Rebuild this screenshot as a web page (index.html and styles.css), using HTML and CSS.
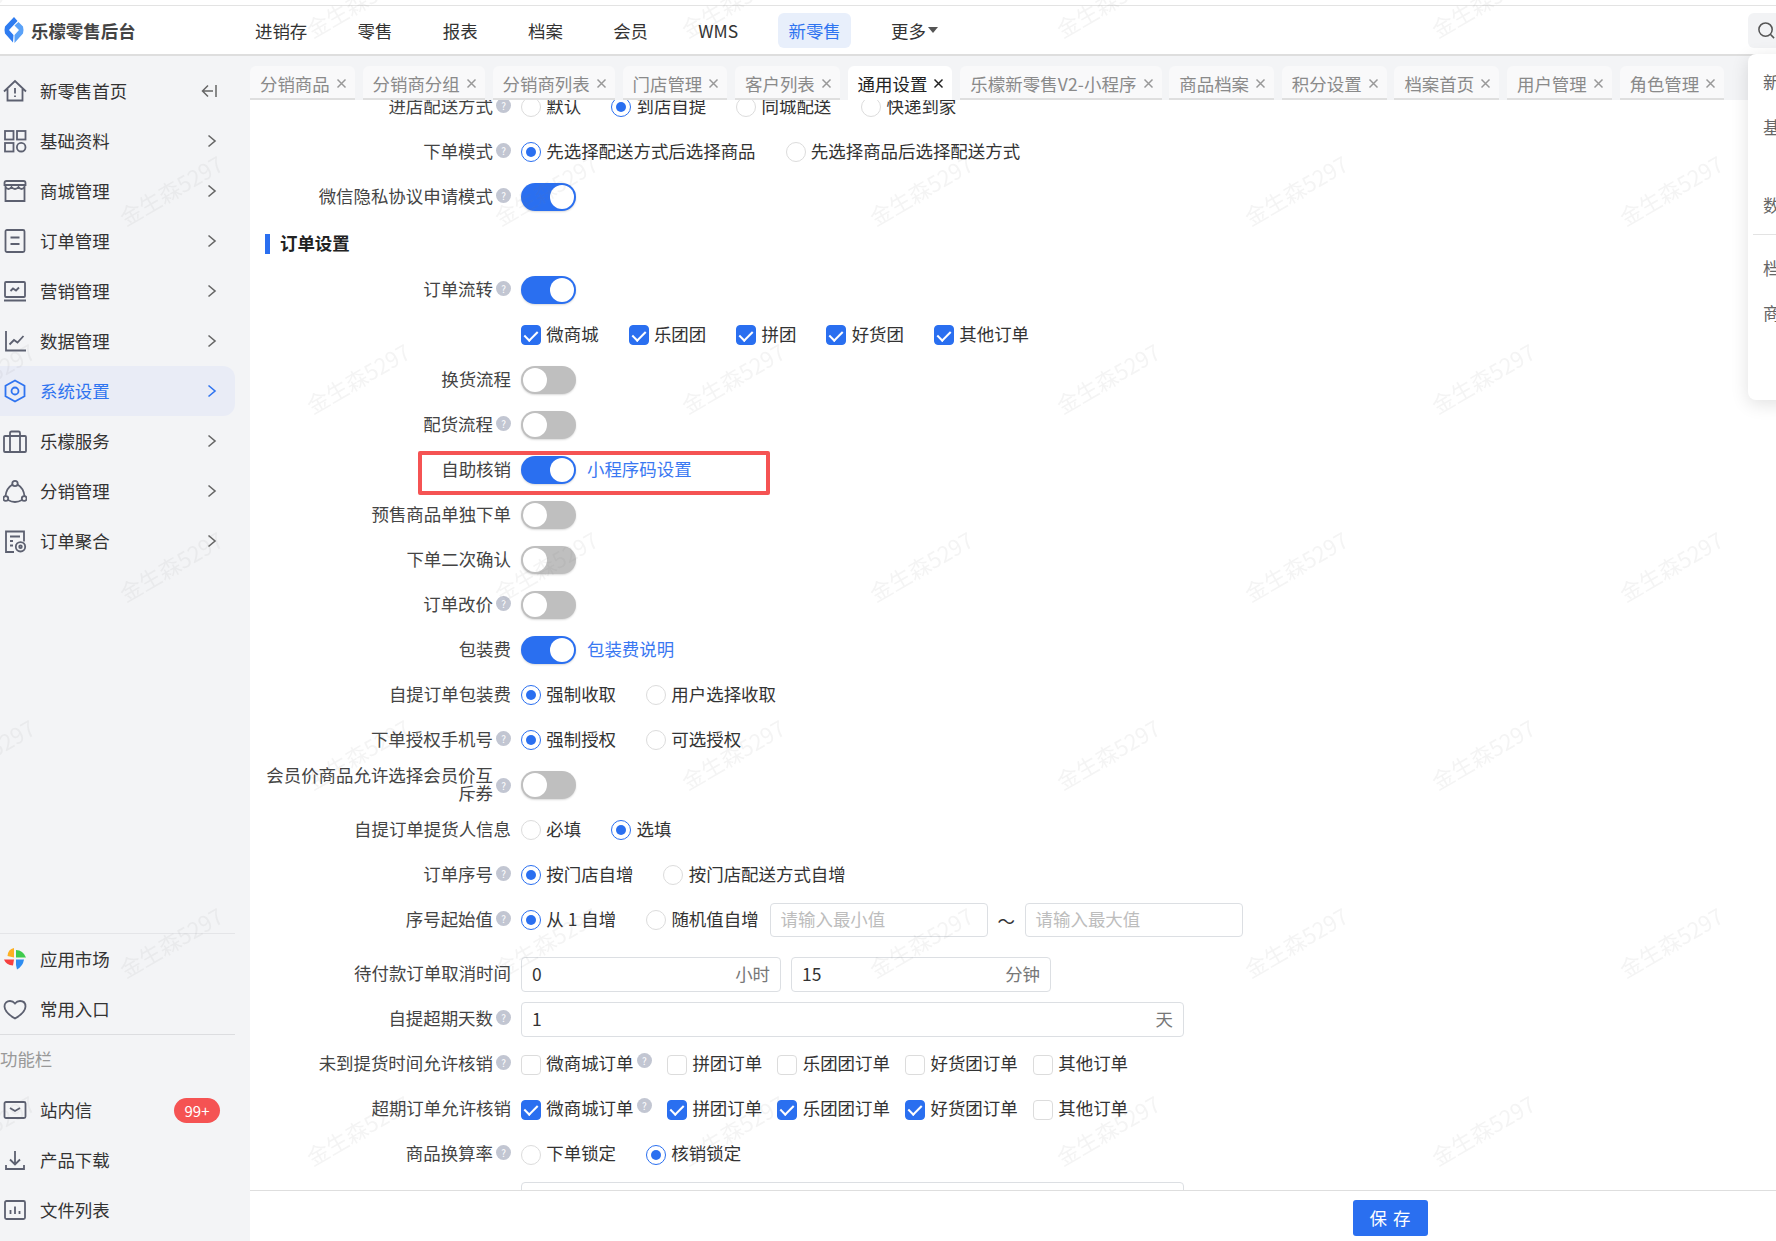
FILE: index.html
```html
<!DOCTYPE html>
<html lang="zh-CN">
<head>
<meta charset="utf-8">
<title>乐檬零售后台</title>
<link rel="stylesheet" href="styles.css">
</head>
<body>
<svg class="defs" aria-hidden="true"><defs>
<symbol id="x" viewBox="0 0 11 11"><path d="M1.5 1.5l8 8M9.5 1.5l-8 8" fill="none" stroke="currentColor" stroke-width="1.5"/></symbol>
<symbol id="chev" viewBox="0 0 10 14"><path d="M1.5 1.5L8 7l-6.500 5.500" fill="none" stroke="currentColor" stroke-width="1.6"/></symbol>
</defs></svg>
<div class="app">
  <header class="topbar">
    <div class="brand">
      <svg class="brand-logo" viewBox="0 0 20 26"><path d="M10 0L1 9.500Q0 13 1 16.500L9 25.500 9.500 18 5 13 13.500 4z" fill="#2f7cf0"/><path d="M19 9.500L14.500 5 10.500 8.500 15 13l-4.500 5v8L19 16.500Q20 13 19 9.500z" fill="#5aa2f8"/></svg>
      <span class="brand-name">乐檬零售后台</span>
    </div>
    <nav class="topnav">
      <a class="topnav-item">进销存</a>
      <a class="topnav-item">零售</a>
      <a class="topnav-item">报表</a>
      <a class="topnav-item">档案</a>
      <a class="topnav-item">会员</a>
      <a class="topnav-item">WMS</a>
      <a class="topnav-item is-active">新零售</a>
      <a class="topnav-item">更多<i class="caret"></i></a>
    </nav>
    <div class="search-btn"><svg viewBox="0 0 20 20"><circle cx="9" cy="9" r="7" fill="none" stroke="#555" stroke-width="1.6"/><path d="M14 14l4 4" stroke="#555" stroke-width="1.6"/></svg></div>
  </header>
  <div class="body">
    <aside class="sidebar">
      <ul class="menu">
        <li class="menu-item"><svg class="mi" viewBox="0 0 24 24"><path d="M1 12.500L12 2l11 10.500M4.500 10v11.500h15V10M12 9v5.500M12 16.500v1.500"/></svg><span class="mt">新零售首页</span><svg class="collapse" viewBox="0 0 16 14"><path d="M7 1.500L1.500 7 7 12.500M1.500 7H12M15 1v12"/></svg></li>
        <li class="menu-item"><svg class="mi" viewBox="0 0 24 24"><rect x="2" y="2" width="8.500" height="8.500"/><rect x="14" y="2" width="8.500" height="8.500"/><rect x="2" y="14" width="8.500" height="8.500"/><circle cx="18.200" cy="18.200" r="4.300"/></svg><span class="mt">基础资料</span><svg class="chev"><use href="#chev"/></svg></li>
        <li class="menu-item"><svg class="mi" viewBox="0 0 24 24"><path d="M3.500 2h17q2 0 2 2v2H1.500V4q0-2 2-2zM2.500 6v16h19V6M2.500 8q3 4 6 0 3.500 4 7 0 3 4 6 0"/></svg><span class="mt">商城管理</span><svg class="chev"><use href="#chev"/></svg></li>
        <li class="menu-item"><svg class="mi" viewBox="0 0 24 24"><rect x="2.500" y="1" width="19" height="22" rx="1.500"/><path d="M7.500 8.500h9M7.500 15h9"/></svg><span class="mt">订单管理</span><svg class="chev"><use href="#chev"/></svg></li>
        <li class="menu-item"><svg class="mi" viewBox="0 0 24 24"><rect x="2" y="3" width="20" height="15" rx="1"/><path d="M1 21.500h22M7.500 12l2.500-2.500 3 2 3-3"/></svg><span class="mt">营销管理</span><svg class="chev"><use href="#chev"/></svg></li>
        <li class="menu-item"><svg class="mi" viewBox="0 0 24 24"><path d="M3 2v19.500h20M6.500 15.500l4.500-4.500 3.500 2.500 6-6.500"/></svg><span class="mt">数据管理</span><svg class="chev"><use href="#chev"/></svg></li>
        <li class="menu-item is-active"><svg class="mi" viewBox="0 0 24 24"><path d="M12 1.500l9.500 5.300v10.400L12 22.500l-9.500-5.300V6.800z"/><circle cx="12" cy="12" r="3.500"/></svg><span class="mt">系统设置</span><svg class="chev"><use href="#chev"/></svg></li>
        <li class="menu-item"><svg class="mi" viewBox="0 0 24 24"><rect x="1" y="7" width="22" height="16" rx="1"/><path d="M7 23V4q0-1.500 1.500-1.500h7Q17 2.500 17 4v19"/></svg><span class="mt">乐檬服务</span><svg class="chev"><use href="#chev"/></svg></li>
        <li class="menu-item"><svg class="mi" viewBox="0 0 24 24"><circle cx="12" cy="4.500" r="2.700"/><circle cx="2.800" cy="19.500" r="2.400"/><circle cx="21.200" cy="19.500" r="2.400"/><path d="M9.500 5.500Q3.500 9 2.500 17M14.500 5.500q6 3.500 7 11.500M5 21q7 4 14 0"/></svg><span class="mt">分销管理</span><svg class="chev"><use href="#chev"/></svg></li>
        <li class="menu-item"><svg class="mi" viewBox="0 0 24 24"><path d="M11 23H3V2.500h18v10"/><path d="M7 7.500h10M7 12h3M7 16.500h3"/><circle cx="17.500" cy="17.800" r="4.700"/><circle cx="17.500" cy="17.800" r="1.300"/></svg><span class="mt">订单聚合</span><svg class="chev"><use href="#chev"/></svg></li>
      </ul>
      <ul class="menu menu-bottom">
        <li class="menu-item"><svg class="mi mi-color" viewBox="0 0 24 24"><path d="M11 10.500V1Q5 2 4.500 9z" fill="#fdb022"/><path d="M13 10.500V3q7 0 10 7.500z" fill="#3ecb4d"/><path d="M13 12.500h8q-1 6.500-7 10L13 18z" fill="#2d8cf0"/><path d="M11 12.500H1q2 5.500 9 6z" fill="#f5403f"/></svg><span class="mt">应用市场</span></li>
        <li class="menu-item"><svg class="mi" viewBox="0 0 24 24"><path d="M12 21.500C5 17.500 1.500 13.500 1.500 9.500 1.500 6 4 4 7 4q3 0 5 2.500Q14 4 17 4q5.500 0 5.500 5.500c0 4-3.500 8-10.500 12z"/></svg><span class="mt">常用入口</span></li>
      </ul>
      <div class="menu-group">功能栏</div>
      <ul class="menu">
        <li class="menu-item"><svg class="mi" viewBox="0 0 24 24"><rect x="1.500" y="4" width="21" height="16" rx="1.500"/><path d="M7 10l5 3 5-3"/></svg><span class="mt">站内信</span><span class="badge">99+</span></li>
        <li class="menu-item"><svg class="mi" viewBox="0 0 24 24"><path d="M12 3v13M7 11.500l5 5 5-5M3 17v4h18v-4"/></svg><span class="mt">产品下载</span></li>
        <li class="menu-item"><svg class="mi" viewBox="0 0 24 24"><rect x="2" y="3" width="20" height="18" rx="1.500"/><path d="M7.500 16v-4M12 16V8.500M16.500 16v-3"/></svg><span class="mt">文件列表</span></li>
      </ul>
    </aside>
    <main class="main">
      <div class="tabs">
        <div class="tab">分销商品<svg class="tab-x"><use href="#x"/></svg></div>
        <div class="tab">分销商分组<svg class="tab-x"><use href="#x"/></svg></div>
        <div class="tab">分销商列表<svg class="tab-x"><use href="#x"/></svg></div>
        <div class="tab">门店管理<svg class="tab-x"><use href="#x"/></svg></div>
        <div class="tab">客户列表<svg class="tab-x"><use href="#x"/></svg></div>
        <div class="tab is-active">通用设置<svg class="tab-x"><use href="#x"/></svg></div>
        <div class="tab tab-long">乐檬新零售V2-小程序<svg class="tab-x"><use href="#x"/></svg></div>
        <div class="tab">商品档案<svg class="tab-x"><use href="#x"/></svg></div>
        <div class="tab">积分设置<svg class="tab-x"><use href="#x"/></svg></div>
        <div class="tab">档案首页<svg class="tab-x"><use href="#x"/></svg></div>
        <div class="tab">用户管理<svg class="tab-x"><use href="#x"/></svg></div>
        <div class="tab">角色管理<svg class="tab-x"><use href="#x"/></svg></div>
      </div>
      <div class="scroll">
        <form class="form">
          <div class="row"><div class="label"><span>进店配送方式</span><i class="help">?</i></div><div class="ctrl opts">
            <label class="opt"><i class="radio"></i>默认</label><label class="opt"><i class="radio on"></i>到店自提</label><label class="opt"><i class="radio"></i>同城配送</label><label class="opt"><i class="radio"></i>快递到家</label></div></div>
          <div class="row"><div class="label"><span>下单模式</span><i class="help">?</i></div><div class="ctrl opts">
            <label class="opt"><i class="radio on"></i>先选择配送方式后选择商品</label><label class="opt"><i class="radio"></i>先选择商品后选择配送方式</label></div></div>
          <div class="row"><div class="label"><span>微信隐私协议申请模式</span><i class="help">?</i></div><div class="ctrl"><i class="switch on"></i></div></div>
          <h3 class="section">订单设置</h3>
          <div class="row"><div class="label"><span>订单流转</span><i class="help">?</i></div><div class="ctrl"><i class="switch on"></i></div></div>
          <div class="row"><div class="label"></div><div class="ctrl opts">
            <label class="opt"><i class="check on"></i>微商城</label><label class="opt"><i class="check on"></i>乐团团</label><label class="opt"><i class="check on"></i>拼团</label><label class="opt"><i class="check on"></i>好货团</label><label class="opt"><i class="check on"></i>其他订单</label></div></div>
          <div class="row"><div class="label"><span>换货流程</span></div><div class="ctrl"><i class="switch"></i></div></div>
          <div class="row"><div class="label"><span>配货流程</span><i class="help">?</i></div><div class="ctrl"><i class="switch"></i></div></div>
          <div class="row row-mark"><div class="label"><span>自助核销</span></div><div class="ctrl"><i class="switch on"></i><a class="link">小程序码设置</a></div><div class="mark"></div></div>
          <div class="row"><div class="label"><span>预售商品单独下单</span></div><div class="ctrl"><i class="switch"></i></div></div>
          <div class="row"><div class="label"><span>下单二次确认</span></div><div class="ctrl"><i class="switch"></i></div></div>
          <div class="row"><div class="label"><span>订单改价</span><i class="help">?</i></div><div class="ctrl"><i class="switch"></i></div></div>
          <div class="row"><div class="label"><span>包装费</span></div><div class="ctrl"><i class="switch on"></i><a class="link">包装费说明</a></div></div>
          <div class="row"><div class="label"><span>自提订单包装费</span></div><div class="ctrl opts">
            <label class="opt"><i class="radio on"></i>强制收取</label><label class="opt"><i class="radio"></i>用户选择收取</label></div></div>
          <div class="row"><div class="label"><span>下单授权手机号</span><i class="help">?</i></div><div class="ctrl opts">
            <label class="opt"><i class="radio on"></i>强制授权</label><label class="opt"><i class="radio"></i>可选授权</label></div></div>
          <div class="row"><div class="label"><span class="wrap">会员价商品允许选择会员价互斥券</span><i class="help help-mid">?</i></div><div class="ctrl"><i class="switch"></i></div></div>
          <div class="row"><div class="label"><span>自提订单提货人信息</span></div><div class="ctrl opts">
            <label class="opt"><i class="radio"></i>必填</label><label class="opt"><i class="radio on"></i>选填</label></div></div>
          <div class="row"><div class="label"><span>订单序号</span><i class="help">?</i></div><div class="ctrl opts">
            <label class="opt"><i class="radio on"></i>按门店自增</label><label class="opt"><i class="radio"></i>按门店配送方式自增</label></div></div>
          <div class="row"><div class="label"><span>序号起始值</span><i class="help">?</i></div><div class="ctrl opts opts-seq">
            <label class="opt"><i class="radio on"></i>从 1 自增</label><label class="opt"><i class="radio"></i>随机值自增</label>
            <div class="range"><div class="input w218 ph">请输入最小值</div><span class="tilde">～</span><div class="input w218 ph">请输入最大值</div></div></div></div>
          <div class="row row-gap"><div class="label"><span>待付款订单取消时间</span></div><div class="ctrl inputs">
            <div class="input w260"><span>0</span><span class="suffix">小时</span></div><div class="input w260"><span>15</span><span class="suffix">分钟</span></div></div></div>
          <div class="row"><div class="label"><span>自提超期天数</span><i class="help">?</i></div><div class="ctrl"><div class="input w663"><span>1</span><span class="suffix">天</span></div></div></div>
          <div class="row"><div class="label"><span>未到提货时间允许核销</span><i class="help">?</i></div><div class="ctrl opts opts-tight">
            <label class="opt"><i class="check"></i>微商城订单<i class="help help-in">?</i></label><label class="opt"><i class="check"></i>拼团订单</label><label class="opt"><i class="check"></i>乐团团订单</label><label class="opt"><i class="check"></i>好货团订单</label><label class="opt"><i class="check"></i>其他订单</label></div></div>
          <div class="row"><div class="label"><span>超期订单允许核销</span></div><div class="ctrl opts opts-tight">
            <label class="opt"><i class="check on"></i>微商城订单<i class="help help-in">?</i></label><label class="opt"><i class="check on"></i>拼团订单</label><label class="opt"><i class="check on"></i>乐团团订单</label><label class="opt"><i class="check on"></i>好货团订单</label><label class="opt"><i class="check"></i>其他订单</label></div></div>
          <div class="row"><div class="label"><span>商品换算率</span><i class="help">?</i></div><div class="ctrl opts">
            <label class="opt"><i class="radio"></i>下单锁定</label><label class="opt"><i class="radio on"></i>核销锁定</label></div></div>
          <div class="row"><div class="label"></div><div class="ctrl"><div class="input w663"></div></div></div>
        </form>
      </div>
      <footer class="footer"><button class="save" type="button">保 存</button></footer>
    </main>
  </div>
  <div class="dropdown">
    <div class="dd-item">新零售</div>
    <div class="dd-item">基础</div>
    <div class="dd-item dd-far">数据</div>
    <div class="dd-sep"></div>
    <div class="dd-item">档案</div>
    <div class="dd-item">商品</div>
  </div>
  <svg class="watermark" aria-hidden="true">
    <defs><pattern id="wm" x="-99" y="100" width="375" height="376" patternUnits="userSpaceOnUse">
      <text class="wm-text" transform="translate(271 92) rotate(-30)" text-anchor="middle" dy="7">金生森5297</text>
      <text class="wm-text" transform="translate(83 280) rotate(-30)" text-anchor="middle" dy="7">金生森5297</text>
    </pattern></defs>
    <rect width="100%" height="100%" fill="url(#wm)"/>
  </svg>
</div>
</body>
</html>
```
FILE: styles.css
```css
* { box-sizing: border-box; }
html, body { margin: 0; height: 100%; overflow: hidden; background: #fff; }
body { font-family: "Noto Sans CJK SC", "Noto Sans", sans-serif; font-size: 17.450px; color: #333; }
ul { list-style: none; margin: 0; padding: 0; }
i { font-style: normal; }
.defs { position: absolute; width: 0; height: 0; }

.app { position: relative; width: 1776px; height: 1241px; overflow: hidden; display: flex; flex-direction: column; padding-top: 5px; }

/* top bar */
.topbar { flex: none; height: 51px; display: flex; align-items: center; border-top: 1px solid #e3e3e3; border-bottom: 2px solid #dedede; background: #fff; }
.brand { width: 245px; flex: none; display: flex; align-items: center; padding-left: 3.500px; gap: 7.500px; }
.brand-logo { width: 20px; height: 26px; flex: none; }
.brand-name { font-weight: 700; color: #444; white-space: nowrap; }
.topnav { display: flex; gap: 30.300px; align-items: center; }
.topnav-item { height: 35px; padding: 0 10px; display: flex; align-items: center; border-radius: 6px; color: #333; white-space: nowrap; }
.topnav-item.is-active { background: #e8effb; color: #2f74f0; }
.caret { width: 0; height: 0; margin-left: 2px; border: 5.500px solid transparent; border-top: 6px solid #555; border-bottom: 0; }
.search-btn { margin-left: auto; width: 28px; height: 35px; background: #f2f3f5; border-radius: 6px 0 0 6px; display: flex; align-items: center; padding-left: 9px; }
.search-btn svg { width: 19px; height: 19px; flex: none; }

.body { flex: 1; min-height: 0; display: flex; }

/* sidebar */
.sidebar { width: 250px; flex: none; background: #f3f4f6; display: flex; flex-direction: column; padding: 10px 0 6px; }
.menu-item { width: 235px; height: 50px; display: flex; align-items: center; position: relative; padding-left: 40px; border-radius: 0 12px 12px 0; color: #333; }
.menu-item.is-active { background: #e9ecf6; color: #2f74f0; }
.mi { position: absolute; left: 3px; top: 13px; width: 24px; height: 24px; fill: none; stroke: #5c6070; stroke-width: 1.8; }
.mi-color { stroke: none; }
.is-active .mi { stroke: #2f74f0; }
.mt { flex: none; margin-bottom: 2px; }
.chev { position: absolute; left: 207px; top: 18px; width: 10px; height: 14px; color: #666; }
.is-active .chev { color: #2f74f0; }
.collapse { position: absolute; left: 201px; top: 18px; width: 16px; height: 14px; fill: none; stroke: #666; stroke-width: 1.5; }
.menu-bottom { margin-top: auto; width: 235px; border-top: 1px solid #e4e5e8; border-bottom: 1px solid #dcdde0; }
.menu-group { width: 235px; height: 50px; display: flex; align-items: center; color: #999; padding-bottom: 3px; }
.badge { position: absolute; left: 174px; top: 12.500px; width: 46px; height: 25px; border-radius: 13px; background: #f55353; color: #fff; font-size: 15px; display: flex; align-items: center; justify-content: center; }

/* main */
.main { flex: 1; min-width: 0; display: flex; flex-direction: column; }
.tabs { flex: none; height: 44px; background: #f3f4f6; padding-top: 10px; display: flex; gap: 7.800px; overflow: hidden; }
.tab { height: 34px; flex: none; display: flex; align-items: center; padding: 2px 8px 0 10px; gap: 6px; background: #f9f9fa; border-bottom: 2px solid #dfdfdf; border-radius: 6px 6px 0 0; color: #8a8a8a; white-space: nowrap; }
.tab.is-active { background: #fff; color: #222; border-bottom-color: #fff; }
.tab-long { letter-spacing: .1px; }
.tab-x { width: 11px; height: 11px; flex: none; color: #999; }
.is-active .tab-x { color: #222; }

.scroll { flex: 1; min-height: 0; overflow: hidden; background: #fff; }
.form { margin: -15.500px 0 0; padding-left: 15px; }
.row { height: 45px; display: flex; align-items: center; position: relative; }
.row-gap { margin-top: 9.500px; }
.label { width: 246px; flex: none; display: flex; justify-content: flex-end; align-items: center; gap: 3px; color: #444; white-space: nowrap; }
.label > span { margin-bottom: 4px; }
.label .wrap { width: 232px; white-space: normal; text-align: right; line-height: 18.500px; margin-bottom: 2px; }
.help { width: 15px; height: 15px; flex: none; margin-bottom: 4px; border-radius: 50%; background: #c2c6d2; color: #fff; font-size: 10px; line-height: 15px; text-align: center; }
.help-mid { margin-bottom: 0; }
.help-in { margin-left: -2px; }
.ctrl { margin-left: 10px; display: flex; align-items: center; }
.opts { gap: 30px; }
.opts-tight { gap: 15.300px; }
.opts-seq .range { margin-left: -19px; display: flex; align-items: center; }
.opt { display: flex; align-items: center; gap: 5.300px; white-space: nowrap; color: #333; padding-bottom: 4px; }
.radio { width: 20px; height: 20px; flex: none; margin-top: 4px; border-radius: 50%; border: 1px solid #dcdcdc; background: #fff; display: flex; align-items: center; justify-content: center; }
.radio.on { border-color: #2a6ff0; }
.radio.on::after { content: ""; width: 10px; height: 10px; border-radius: 50%; background: #2a6ff0; }
.check { width: 20px; height: 20px; flex: none; margin-top: 4px; border-radius: 4px; border: 1px solid #dcdcdc; background: #fff; display: flex; align-items: center; justify-content: center; }
.check.on { background: #2a6ff0; border-color: #2a6ff0; }
.check.on::after { content: ""; width: 6px; height: 11px; margin-top: -2px; border: solid #fff; border-width: 0 2px 2px 0; transform: rotate(45deg); }
.switch { width: 55px; height: 28px; flex: none; border-radius: 14px; background: #bfbfbf; display: flex; align-items: center; padding: 0 2px; box-shadow: 0 1px 2px rgba(0,0,0,.15); }
.switch.on { background: #2a6ff0; justify-content: flex-end; }
.switch::after { content: ""; width: 24px; height: 24px; border-radius: 50%; background: #fff; }
.link { margin-left: 11px; margin-bottom: 4px; color: #3a78f2; white-space: nowrap; }
.section { height: 48px; margin: 0; display: flex; align-items: center; font-size: 17.450px; font-weight: 700; color: #222; position: relative; padding: 0 0 2px 15px; }
.section::before { content: ""; position: absolute; left: 0; top: 14px; width: 5px; height: 20px; background: #2a6ff0; }
.mark { position: absolute; left: 152.500px; top: 3px; width: 352px; height: 44px; border: 4px solid #f55353; border-radius: 2px; }
.input { height: 35px; border: 1px solid #dcdfe3; border-radius: 4px; display: flex; align-items: center; justify-content: space-between; padding: 0 10px 3px; color: #333; background: #fff; flex: none; }
.input.ph { color: #bdbdbd; height: 34px; }
.suffix { color: #777; }
.inputs { gap: 10px; }
.w218 { width: 218px; }
.w260 { width: 260px; }
.w663 { width: 663px; }
.tilde { width: 37px; text-align: center; color: #333; }
.footer { flex: none; height: 51px; border-top: 1px solid #dedede; background: #fff; display: flex; align-items: flex-start; padding: 9px 0 0 1103px; }
.save { width: 75px; height: 36px; border: 0; border-radius: 3px; background: #2a6ff0; color: #fff; font: inherit; letter-spacing: 1px; padding: 0 0 2px; }

/* overlays */
.dropdown { position: absolute; left: 1748px; top: 54px; width: 300px; height: 346px; background: #fff; border-radius: 8px 0 0 8px; box-shadow: 0 4px 18px rgba(0,0,0,.12); padding: 6px 0 0 15px; color: #666; }
.dd-item { height: 45px; display: flex; align-items: center; white-space: nowrap; padding-bottom: 3px; }
.dd-far { margin-top: 33px; }
.dd-sep { height: 1px; margin: 6px 0 11px -10px; background: #e3e3e3; }
.watermark { position: absolute; left: 0; top: 0; width: 1776px; height: 1241px; pointer-events: none; }
.wm-text { font-family: "Noto Sans CJK SC", sans-serif; font-size: 22px; fill: rgba(120,120,120,.08); }
```
